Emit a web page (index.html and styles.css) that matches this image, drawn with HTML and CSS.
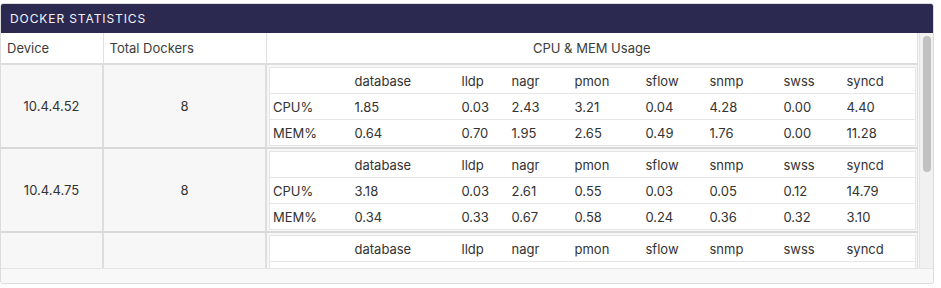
FILE: index.html
```html
<!DOCTYPE html>
<html>
<head>
<meta charset="utf-8">
<link rel="stylesheet" href="styles.css">
</head>
<body>
<div class="card">
  <div class="card-title">DOCKER STATISTICS</div>
  <div class="card-body">
    <div class="scroll">
      <div class="viewport">
        <table class="outer">
          <colgroup><col class="c-dev"><col class="c-tot"><col></colgroup>
          <thead>
            <tr><th class="h-left">Device</th><th class="h-left">Total Dockers</th><th class="h-center">CPU &amp; MEM Usage</th></tr>
          </thead>
          <tbody>
            <tr>
              <td class="mid">10.4.4.52</td>
              <td class="mid">8</td>
              <td class="inner-cell">
                <table class="inner">
                  <colgroup><col class="i-lab"><col class="i-db"><col class="i-lldp"><col class="i-nagr"><col class="i-pmon"><col class="i-sflow"><col class="i-snmp"><col class="i-swss"><col></colgroup>
                  <tr><td></td><td>database</td><td>lldp</td><td>nagr</td><td>pmon</td><td>sflow</td><td>snmp</td><td>swss</td><td>syncd</td></tr>
                  <tr><td>CPU%</td><td>1.85</td><td>0.03</td><td>2.43</td><td>3.21</td><td>0.04</td><td>4.28</td><td>0.00</td><td>4.40</td></tr>
                  <tr><td>MEM%</td><td>0.64</td><td>0.70</td><td>1.95</td><td>2.65</td><td>0.49</td><td>1.76</td><td>0.00</td><td>11.28</td></tr>
                </table>
              </td>
            </tr>
            <tr>
              <td class="mid">10.4.4.75</td>
              <td class="mid">8</td>
              <td class="inner-cell">
                <table class="inner">
                  <colgroup><col class="i-lab"><col class="i-db"><col class="i-lldp"><col class="i-nagr"><col class="i-pmon"><col class="i-sflow"><col class="i-snmp"><col class="i-swss"><col></colgroup>
                  <tr><td></td><td>database</td><td>lldp</td><td>nagr</td><td>pmon</td><td>sflow</td><td>snmp</td><td>swss</td><td>syncd</td></tr>
                  <tr><td>CPU%</td><td>3.18</td><td>0.03</td><td>2.61</td><td>0.55</td><td>0.03</td><td>0.05</td><td>0.12</td><td>14.79</td></tr>
                  <tr><td>MEM%</td><td>0.34</td><td>0.33</td><td>0.67</td><td>0.58</td><td>0.24</td><td>0.36</td><td>0.32</td><td>3.10</td></tr>
                </table>
              </td>
            </tr>
            <tr>
              <td class="mid"></td>
              <td class="mid"></td>
              <td class="inner-cell">
                <table class="inner">
                  <colgroup><col class="i-lab"><col class="i-db"><col class="i-lldp"><col class="i-nagr"><col class="i-pmon"><col class="i-sflow"><col class="i-snmp"><col class="i-swss"><col></colgroup>
                  <tr><td></td><td>database</td><td>lldp</td><td>nagr</td><td>pmon</td><td>sflow</td><td>snmp</td><td>swss</td><td>syncd</td></tr>
                  <tr><td>CPU%</td><td>0.00</td><td>0.00</td><td>0.00</td><td>0.00</td><td>0.00</td><td>0.00</td><td>0.00</td><td>0.00</td></tr>
                  <tr><td>MEM%</td><td>0.00</td><td>0.00</td><td>0.00</td><td>0.00</td><td>0.00</td><td>0.00</td><td>0.00</td><td>0.00</td></tr>
                </table>
              </td>
            </tr>
          </tbody>
        </table>
      </div>
      <div class="vscroll"><div class="thumb"></div></div>
    </div>
    <div class="hbar"></div>
  </div>
</div>
</body>
</html>
```

FILE: styles.css
```css
html, body {
  margin: 0;
  padding: 0;
  background: #ffffff;
}
body {
  font-family: Inter, "Liberation Sans", sans-serif;
  font-size: 13px;
  color: #333333;
}
.card {
  margin-top: 3px;
  width: 932px;
  border: 1px solid #dcdcdc;
  border-radius: 3px;
  overflow: hidden;
  background: #f8f8f8;
}
.card-title {
  height: 29px;
  line-height: 29px;
  background: #2b2950;
  color: #f4f4f8;
  font-size: 12px;
  letter-spacing: 0.9px;
  padding-left: 9px;
}
.scroll {
  display: flex;
  height: 235px;
}
.viewport {
  width: 918px;
  height: 235px;
  overflow: hidden;
  background: #f7f7f7;
}
.vscroll {
  width: 13px;
  border-left: 1px solid #e4e4e4;
  background: #f1f1f1;
  display: flex;
  flex-direction: column;
  align-items: center;
}
.thumb {
  margin-top: 3px;
  width: 8px;
  height: 136px;
  border-radius: 4px;
  background: #c1c1c1;
}
.hbar {
  height: 14px;
  border-top: 1px solid #e4e4e4;
  background: #f8f8f8;
}
.outer {
  width: 917px;
  table-layout: fixed;
  border-collapse: collapse;
}
.c-dev { width: 102px; }
.c-tot { width: 163px; }
.outer th {
  height: 30px;
  padding: 0;
  background: #ffffff;
  font-weight: normal;
  color: #3c3c3c;
  border-right: 1px solid #e0e0e0;
  border-bottom: 2px solid #dddddd;
}
.h-left { text-align: left; padding-left: 6px !important; }
.h-center { text-align: center; }
.outer td.mid {
  height: 82px;
  padding: 0;
  text-align: center;
  vertical-align: middle;
  border-right: 2px solid #dedede;
  border-bottom: 2px solid #d9d9d9;
}
.outer td.inner-cell {
  padding: 2px 1px 1px 2px;
  vertical-align: top;
  border-bottom: 2px solid #d9d9d9;
  border-right: 1px solid #e0e0e0;
}
.inner {
  width: 100%;
  table-layout: fixed;
  border-collapse: collapse;
  background: #ffffff;
  border: 1px solid #e6e6e6;
}
.inner td {
  height: 25px;
  padding: 0 0 0 3px;
  border-bottom: 1px solid #e6e6e6;
  white-space: nowrap;
  color: #333333;
}
.i-lab { width: 82px; }
.i-db { width: 107px; }
.i-lldp { width: 50px; }
.i-nagr { width: 63px; }
.i-pmon { width: 71px; }
.i-sflow { width: 64px; }
.i-snmp { width: 74px; }
.i-swss { width: 63px; }
```
